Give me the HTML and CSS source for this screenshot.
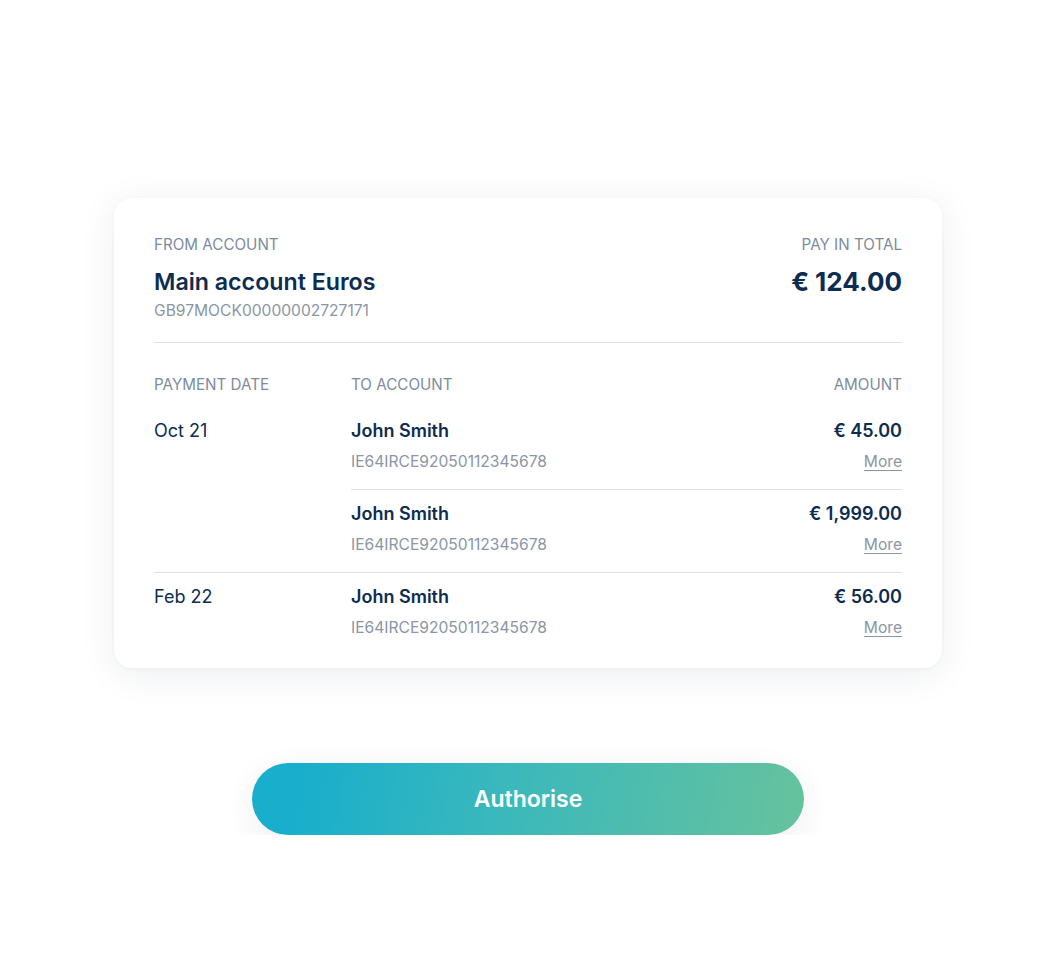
FILE: index.html
```html
<!DOCTYPE html>
<html lang="en">
<head>
    <meta charset="UTF-8">
    <title>Authorise payment</title>
    <link rel="stylesheet" href="styles.css">
</head>
<body>
    <div class="page">
        <div class="card">
            <div class="summary">
                <div class="from">
                    <div class="label">From account</div>
                    <div class="account-name">Main account Euros</div>
                    <div class="iban">GB97MOCK00000002727171</div>
                </div>
                <div class="total">
                    <div class="label">Pay in total</div>
                    <div class="total-amount">€ 124.00</div>
                </div>
            </div>

            <div class="table-head">
                <div class="label col-date">Payment date</div>
                <div class="label col-to">To account</div>
                <div class="label col-amount">Amount</div>
            </div>

            <div class="group">
                <div class="date">Oct 21</div>
                <div class="payments">
                    <div class="payment">
                        <div class="payee">
                            <div class="name">John Smith</div>
                            <div class="iban">IE64IRCE92050112345678</div>
                        </div>
                        <div class="amount">
                            <div class="value">€ 45.00</div>
                            <a class="more" href="#">More</a>
                        </div>
                    </div>
                    <div class="payment">
                        <div class="payee">
                            <div class="name">John Smith</div>
                            <div class="iban">IE64IRCE92050112345678</div>
                        </div>
                        <div class="amount">
                            <div class="value">€ 1,999.00</div>
                            <a class="more" href="#">More</a>
                        </div>
                    </div>
                </div>
            </div>

            <div class="group">
                <div class="date">Feb 22</div>
                <div class="payments">
                    <div class="payment">
                        <div class="payee">
                            <div class="name">John Smith</div>
                            <div class="iban">IE64IRCE92050112345678</div>
                        </div>
                        <div class="amount">
                            <div class="value">€ 56.00</div>
                            <a class="more" href="#">More</a>
                        </div>
                    </div>
                </div>
            </div>
        </div>

        <button class="authorise">Authorise</button>
    </div>
</body>
</html>
```

FILE: styles.css
```css
body, html {
    margin: 0;
    padding: 0;
    background: #ffffff;
    font-family: Inter, "Noto Sans", sans-serif;
    color: #0d2c51;
}
.page {
    display: flex;
    flex-direction: column;
    align-items: center;
    padding-top: 198px;
}
.card {
    width: 828px;
    box-sizing: border-box;
    padding: 38px 40px 13px;
    background: #ffffff;
    border-radius: 18px;
    box-shadow: 0 6px 36px rgba(20, 40, 60, 0.08), 0 1px 5px rgba(20, 40, 60, 0.04);
}
.label {
    font-size: 15.2px;
    line-height: 18px;
    text-transform: uppercase;
    color: #7d8b9d;
}
.summary {
    display: flex;
    justify-content: space-between;
    padding-bottom: 22px;
    border-bottom: 1px solid #dde2e7;
}
.account-name {
    margin-top: 14px;
    font-size: 23.2px;
    line-height: 28px;
    font-weight: 600;
}
.iban {
    margin-top: 6px;
    font-size: 15.6px;
    line-height: 18px;
    color: #8a96a5;
}
.total {
    text-align: right;
}
.total-amount {
    margin-top: 14px;
    font-size: 26px;
    line-height: 28px;
    font-weight: 700;
}
.table-head {
    display: flex;
    margin-top: 33px;
    margin-bottom: 13px;
}
.col-date {
    width: 197px;
}
.col-to {
    flex: 1;
}
.group {
    display: flex;
}
.group + .group {
    border-top: 1px solid #dde2e7;
}
.date {
    width: 197px;
    padding-top: 13px;
    font-size: 18px;
    line-height: 22px;
}
.payments {
    flex: 1;
}
.payment {
    display: flex;
    justify-content: space-between;
    padding: 13px 0 18px;
}
.payment + .payment {
    border-top: 1px solid #dde2e7;
}
.name, .value {
    font-size: 18px;
    line-height: 22px;
    font-weight: 600;
}
.payee .iban {
    margin-top: 11px;
}
.amount {
    display: flex;
    flex-direction: column;
    align-items: flex-end;
}
.more {
    margin-top: 11px;
    font-size: 15.6px;
    line-height: 18px;
    color: #8a96a5;
    text-decoration: underline;
    text-underline-offset: 3px;
}
.authorise {
    margin-top: 95px;
    width: 552px;
    height: 72px;
    border: none;
    border-radius: 36px;
    background: linear-gradient(100deg, #18aecc 8%, #3ab8bc 45%, #65c29e 98%);
    box-shadow: 0 8px 30px rgba(20, 40, 60, 0.08);
    color: #ffffff;
    font-family: Inter, "Noto Sans", sans-serif;
    font-size: 23px;
    font-weight: 600;
    cursor: pointer;
}
```
